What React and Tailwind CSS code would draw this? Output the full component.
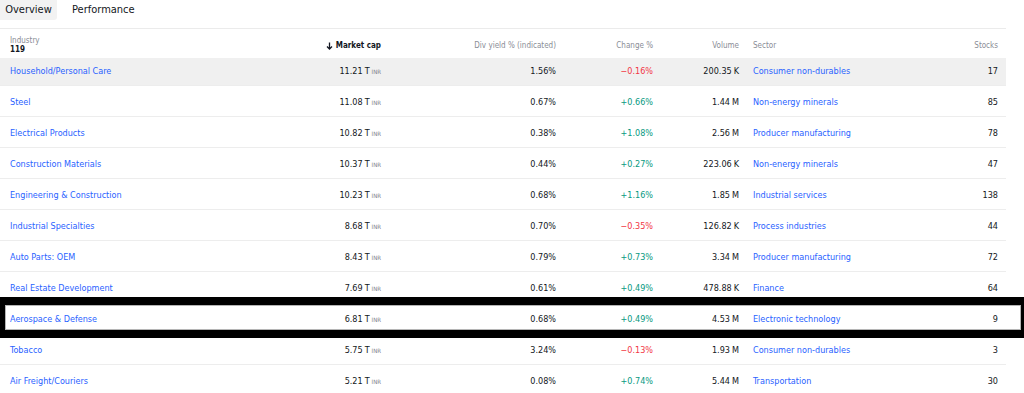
import React from 'react';

const rows = [
    ['Household/Personal Care', '11.21', '1.56%', '−0.16%', '200.35', 'K', 'Consumer non-durables', '17'],
    ['Steel', '11.08', '0.67%', '+0.66%', '1.44', 'M', 'Non-energy minerals', '85'],
    ['Electrical Products', '10.82', '0.38%', '+1.08%', '2.56', 'M', 'Producer manufacturing', '78'],
    ['Construction Materials', '10.37', '0.44%', '+0.27%', '223.06', 'K', 'Non-energy minerals', '47'],
    ['Engineering & Construction', '10.23', '0.68%', '+1.16%', '1.85', 'M', 'Industrial services', '138'],
    ['Industrial Specialties', '8.68', '0.70%', '−0.35%', '126.82', 'K', 'Process industries', '44'],
    ['Auto Parts: OEM', '8.43', '0.79%', '+0.73%', '3.34', 'M', 'Producer manufacturing', '72'],
    ['Real Estate Development', '7.69', '0.61%', '+0.49%', '478.88', 'K', 'Finance', '64'],
    ['Aerospace & Defense', '6.81', '0.68%', '+0.49%', '4.53', 'M', 'Electronic technology', '9'],
    ['Tobacco', '5.75', '3.24%', '−0.13%', '1.93', 'M', 'Consumer non-durables', '3'],
    ['Air Freight/Couriers', '5.21', '0.08%', '+0.74%', '5.44', 'M', 'Transportation', '30'],
];

const cols = 'grid grid-cols-[260px_111px_175px_97px_86px_201px_58px] pl-[10px] pr-[8px] items-center';

export default function App() {
    return (
        <div className="relative w-[1024px] h-[393px] overflow-hidden bg-white font-['DejaVu_Sans_Condensed','DejaVu_Sans',sans-serif] text-[#131722]">
            {/* TABS */}
            <div className="flex h-[28px] items-start">
                <div className="h-[20px] w-[57px] bg-[#f2f2f2] rounded-br-[3px] flex items-center justify-center text-[11px] text-[#131722]">Overview</div>
                <div className="h-[20px] ml-[15px] flex items-center text-[11px] text-[#131722]">Performance</div>
            </div>

            {/* TABLE */}
            <div className="w-[1006px]">
                <div className={`${cols} h-[30px] pt-[4px] border-t border-[#ebebeb] text-[8px] text-[#8a8d96]`}>
                    <div className="flex flex-col leading-[9px] -mt-[1px]">
                        <span>Industry</span>
                        <span className="font-bold text-[#131722]">119</span>
                    </div>
                    <div className="flex items-center justify-end gap-[3px] text-[#131722] font-bold">
                        <svg width="7" height="8" viewBox="0 0 7 8" fill="none" stroke="#131722" strokeWidth="1.3">
                            <path d="M3.5 0.5V7M1 4.5l2.5 2.5L6 4.5" />
                        </svg>
                        Market cap
                    </div>
                    <div className="text-right">Div yield % (indicated)</div>
                    <div className="text-right">Change %</div>
                    <div className="text-right">Volume</div>
                    <div className="pl-[14px]">Sector</div>
                    <div className="text-right">Stocks</div>
                </div>

                {rows.map((r, i) => (
                    <div
                        key={r[0]}
                        className={`${cols} ${i === 0 ? 'h-[28px] bg-[#f0f0f0]' : 'h-[31px] pt-[4px]'} border-b border-[#ededed] text-[9px]`}
                    >
                        <div className="text-[#2962ff]">{r[0]}</div>
                        <div className="text-right">
                            {r[1]}<span className="ml-[2px]">T</span>
                            <span className="ml-[2px] text-[6px] text-[#787b86]">INR</span>
                        </div>
                        <div className="text-right">{r[2]}</div>
                        <div className={`text-right ${r[3].startsWith('+') ? 'text-[#089981]' : 'text-[#f23645]'}`}>{r[3]}</div>
                        <div className="text-right">
                            {r[4]}<span className="ml-[2px]">{r[5]}</span>
                        </div>
                        <div className="pl-[14px] text-[#2962ff]">{r[6]}</div>
                        <div className="text-right">{r[7]}</div>
                    </div>
                ))}
            </div>

            {/* highlight box over the Aerospace row */}
            <div className="absolute left-0 top-[297px] w-[1024px] h-[41px] border-y-[8px] border-l-[5px] border-r-[3px] border-black">
                <div className="h-full w-full border border-[#b5b5b5]"></div>
            </div>
        </div>
    );
}
